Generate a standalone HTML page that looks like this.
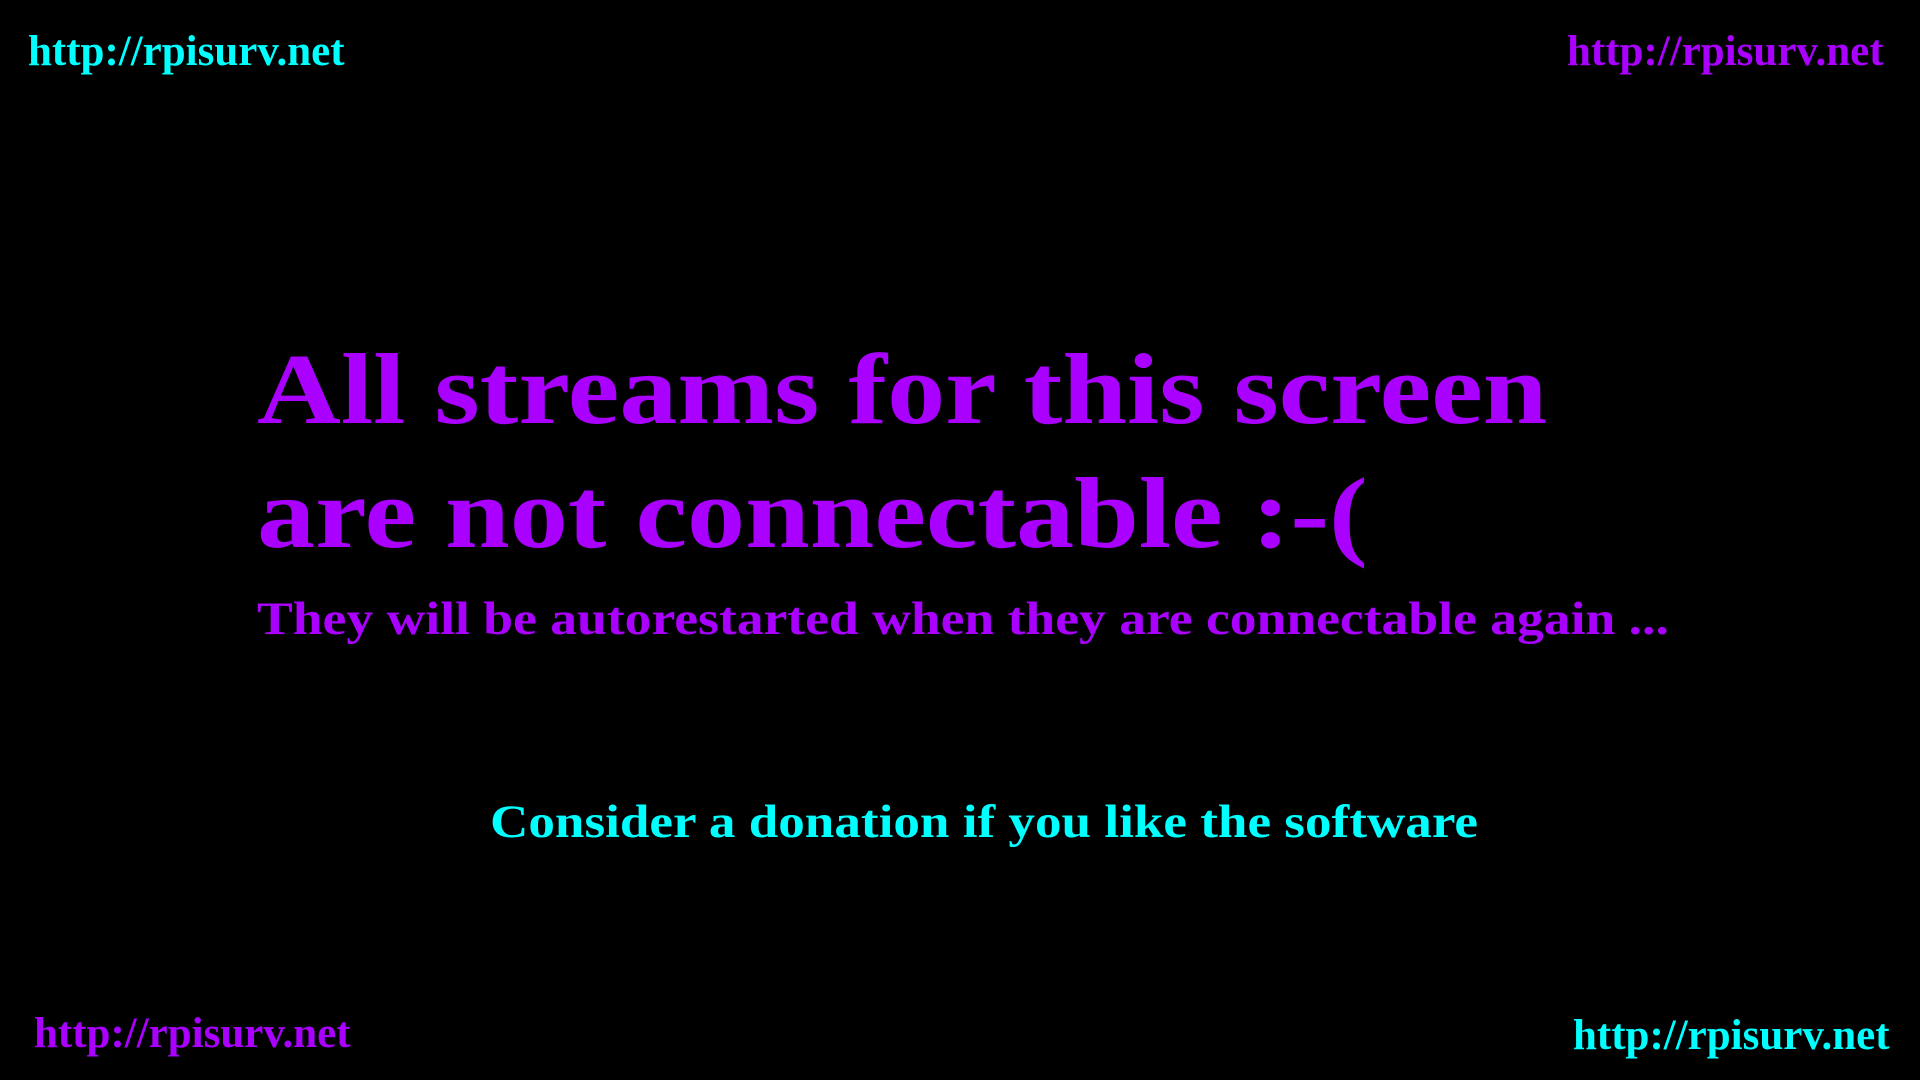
<!DOCTYPE html>
<html><head><meta charset="utf-8"><style>
html,body{margin:0;padding:0;background:#000;width:1920px;height:1080px;overflow:hidden}
body{position:relative;font-family:"Liberation Serif",serif;font-weight:bold}
.t{position:absolute;white-space:nowrap;line-height:1;transform-origin:0 0}
.c{color:#00ffff}.p{color:#aa00ff}
.u{font-size:43px}
</style></head><body>
<div class="t u c" style="left:28px;top:30px">http://rpisurv.net</div>
<div class="t u p" style="left:1567px;top:30px">http://rpisurv.net</div>
<div class="t u p" style="left:34px;top:1012px">http://rpisurv.net</div>
<div class="t u c" style="left:1573px;top:1014px">http://rpisurv.net</div>
<div class="t p" style="left:257px;top:339px;font-size:101px;transform:scaleX(1.15)">All streams for this screen</div>
<div class="t p" style="left:257px;top:463px;font-size:101px;transform:scaleX(1.15)">are not connectable :-(</div>
<div class="t p" style="left:257px;top:596px;font-size:47px;transform:scaleX(1.14)">They will be autorestarted when they are connectable again ...</div>
<div class="t c" style="left:0;width:1968px;text-align:center;top:799px;font-size:47px;transform:scaleX(1.13);transform-origin:50% 0">Consider a donation if you like the software</div>
</body></html>
